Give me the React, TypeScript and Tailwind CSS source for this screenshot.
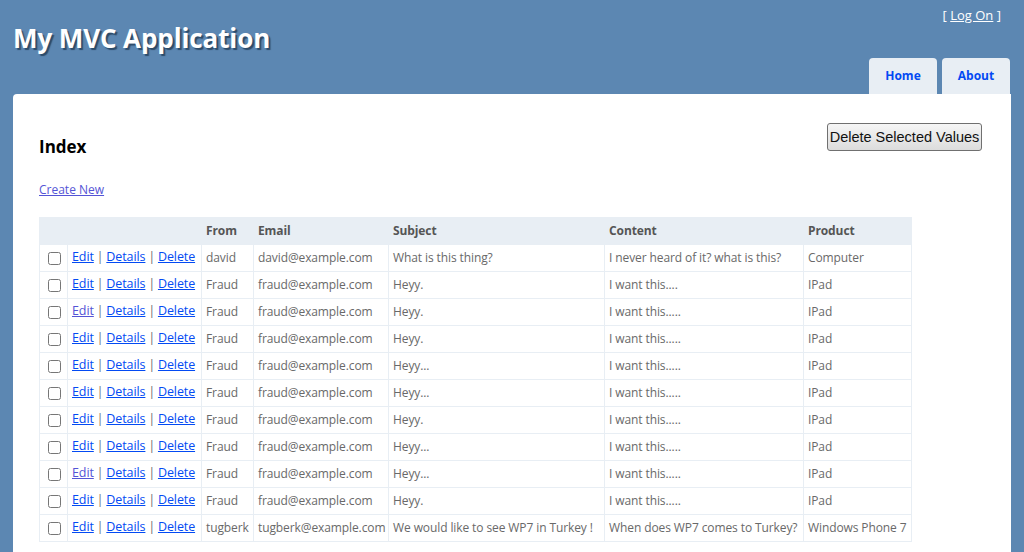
import React from "react";

type Row = {
  from: string;
  email: string;
  subject: string;
  content: string;
  product: string;
  visited?: boolean;
};

const rows: Row[] = [
  { from: "david", email: "david@example.com", subject: "What is this thing?", content: "I never heard of it? what is this?", product: "Computer" },
  { from: "Fraud", email: "fraud@example.com", subject: "Heyy.", content: "I want this....", product: "IPad" },
  { from: "Fraud", email: "fraud@example.com", subject: "Heyy.", content: "I want this.....", product: "IPad", visited: true },
  { from: "Fraud", email: "fraud@example.com", subject: "Heyy.", content: "I want this.....", product: "IPad" },
  { from: "Fraud", email: "fraud@example.com", subject: "Heyy...", content: "I want this.....", product: "IPad" },
  { from: "Fraud", email: "fraud@example.com", subject: "Heyy...", content: "I want this.....", product: "IPad" },
  { from: "Fraud", email: "fraud@example.com", subject: "Heyy.", content: "I want this.....", product: "IPad" },
  { from: "Fraud", email: "fraud@example.com", subject: "Heyy...", content: "I want this.....", product: "IPad" },
  { from: "Fraud", email: "fraud@example.com", subject: "Heyy...", content: "I want this.....", product: "IPad", visited: true },
  { from: "Fraud", email: "fraud@example.com", subject: "Heyy.", content: "I want this.....", product: "IPad" },
  { from: "tugberk", email: "tugberk@example.com", subject: "We would like to see WP7 in Turkey !", content: "When does WP7 comes to Turkey?", product: "Windows Phone 7" },
];

const cell = "border border-[#e8eef4] pl-[4px] pr-[1px] h-[27px] whitespace-nowrap";

const App = () => {
  return (
    <div className="min-h-[552px] bg-[#5c87b2] font-['Open_Sans',sans-serif] overflow-hidden">
      {/* header */}
      <div className="flex justify-between h-[94px]">
        <h1 className="pl-[13px] pt-[20px] text-[26px] leading-[36px] font-bold text-white [text-shadow:2px_2px_1px_#2d4b69] tracking-[-0.1px]">
          My MVC Application
        </h1>
        <div className="flex flex-col items-end pr-[14px]">
          <div className="pt-[5px] pr-[9px] text-[13px] text-white leading-[20px]">
            [ <a className="underline text-white">Log On</a> ]
          </div>
          <div className="flex gap-[5px] mt-[33px]">
            <a className="w-[68px] h-[36px] flex items-center justify-center bg-[#e8eef4] rounded-t-[4px] text-[12px] font-bold text-[#034af3]">
              Home
            </a>
            <a className="w-[68px] h-[36px] flex items-center justify-center bg-[#e8eef4] rounded-t-[4px] text-[12px] font-bold text-[#034af3]">
              About
            </a>
          </div>
        </div>
      </div>

      {/* main panel */}
      <div className="ml-[13px] mr-[13px] bg-white rounded-tl-[4px] pl-[26px] pr-[29px] pt-[29px] pb-[10px] min-h-[460px]">
        <div className="flex justify-between items-start">
          <h2 className="pt-[11px] text-[17px] font-bold text-black">Index</h2>
          <button className="w-[155px] h-[28px] border border-[#707070] rounded-[3px] bg-gradient-to-b from-[#f6f6f6] to-[#dcdcdc] text-[14.5px] text-[#111] font-['Liberation_Sans',sans-serif] leading-none">
            Delete Selected Values
          </button>
        </div>
        <p className="mt-[22px] text-[12px] leading-[16px]">
          <a className="underline text-[#5454d6]">Create New</a>
        </p>
        <table className="mt-[19px] w-[872px] border-collapse text-[12px] tracking-[-0.1px] text-[#696969] table-fixed">
          <colgroup>
            <col className="w-[28px]" />
            <col className="w-[134px]" />
            <col className="w-[52px]" />
            <col className="w-[135px]" />
            <col className="w-[216px]" />
            <col className="w-[199px]" />
            <col className="w-[108px]" />
          </colgroup>
          <thead>
            <tr className="bg-[#e8eef4] text-[#555] font-bold text-left">
              <th className={cell}></th>
              <th className={cell}></th>
              <th className={cell}>From</th>
              <th className={cell}>Email</th>
              <th className={cell}>Subject</th>
              <th className={cell}>Content</th>
              <th className={cell}>Product</th>
            </tr>
          </thead>
          <tbody>
            {rows.map((r, i) => (
              <tr key={i}>
                <td className="border border-[#e8eef4] h-[27px] pl-[8px]">
                  <input type="checkbox" className="w-[13px] h-[13px] m-0 align-middle" />
                </td>
                <td className={cell}>
                  <a className={"underline text-[12.5px] " + (r.visited ? "text-[#5454d6]" : "text-[#034af3]")}>Edit</a>
                  {" | "}
                  <a className="underline text-[12.5px] text-[#034af3]">Details</a>
                  {" | "}
                  <a className="underline text-[12.5px] text-[#034af3]">Delete</a>
                </td>
                <td className={cell}>{r.from}</td>
                <td className={cell}>{r.email}</td>
                <td className={cell}>{r.subject}</td>
                <td className={cell}>{r.content}</td>
                <td className={cell}>{r.product}</td>
              </tr>
            ))}
          </tbody>
        </table>
      </div>
    </div>
  );
};

export default App;
